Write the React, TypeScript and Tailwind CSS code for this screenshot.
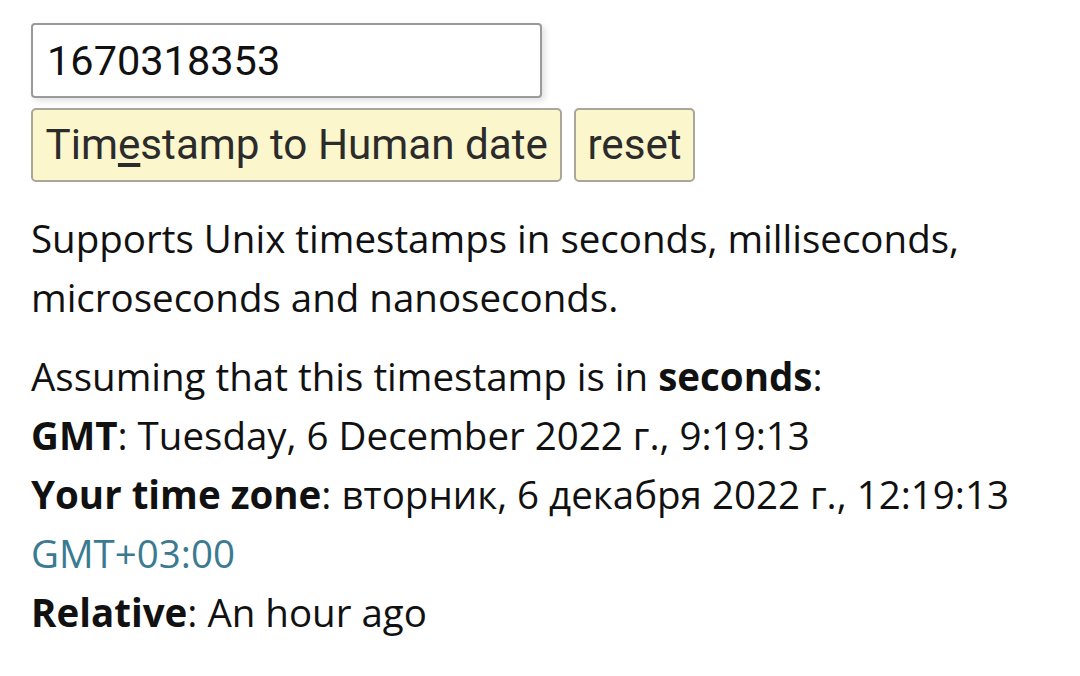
export default function App() {
  return (
    <div className="min-h-screen bg-white pl-[31px] pt-[23px] text-black">
      {/* input + buttons */}
      <div className="flex flex-col gap-[10px] font-['Roboto',sans-serif]">
        <input
          type="text"
          defaultValue="1670318353"
          className="box-border h-[75px] w-[511px] rounded-[4px] border-2 border-[#9a9a9a] bg-white px-[14px] text-[41.5px] text-[#111] shadow-[3px_3px_6px_rgba(0,0,0,0.12)] outline-none"
        />
        <div className="flex gap-[12px]">
          <button className="box-border h-[74px] rounded-[5px] border-2 border-[#a9a69a] bg-[#fcf6cc] px-[12.5px] text-[42.2px] text-[#2b2b2b]">
            Tim<u className="underline-offset-4">e</u>stamp to Human date
          </button>
          <button className="box-border h-[74px] rounded-[5px] border-2 border-[#a9a69a] bg-[#fcf6cc] px-[11px] text-[42.2px] text-[#2b2b2b]">
            reset
          </button>
        </div>
      </div>

      {/* result text */}
      <div className="font-['Open_Sans',sans-serif] text-[38.5px] leading-[59px] text-[#111]">
        <p className="mt-[27px]">
          Supports Unix timestamps in seconds, milliseconds,
          <br />
          microseconds and nanoseconds.
        </p>
        <p className="mt-[20px]">
          Assuming that this timestamp is in <b>seconds</b>:
          <br />
          <b>GMT</b>: Tuesday, 6 December 2022 г., 9:19:13
          <br />
          <b>Your time zone</b>: вторник, 6 декабря 2022 г., 12:19:13
          <br />
          <span className="text-[#3a7b92]">GMT+03:00</span>
          <br />
          <b>Relative</b>: An hour ago
        </p>
      </div>
    </div>
  );
}
